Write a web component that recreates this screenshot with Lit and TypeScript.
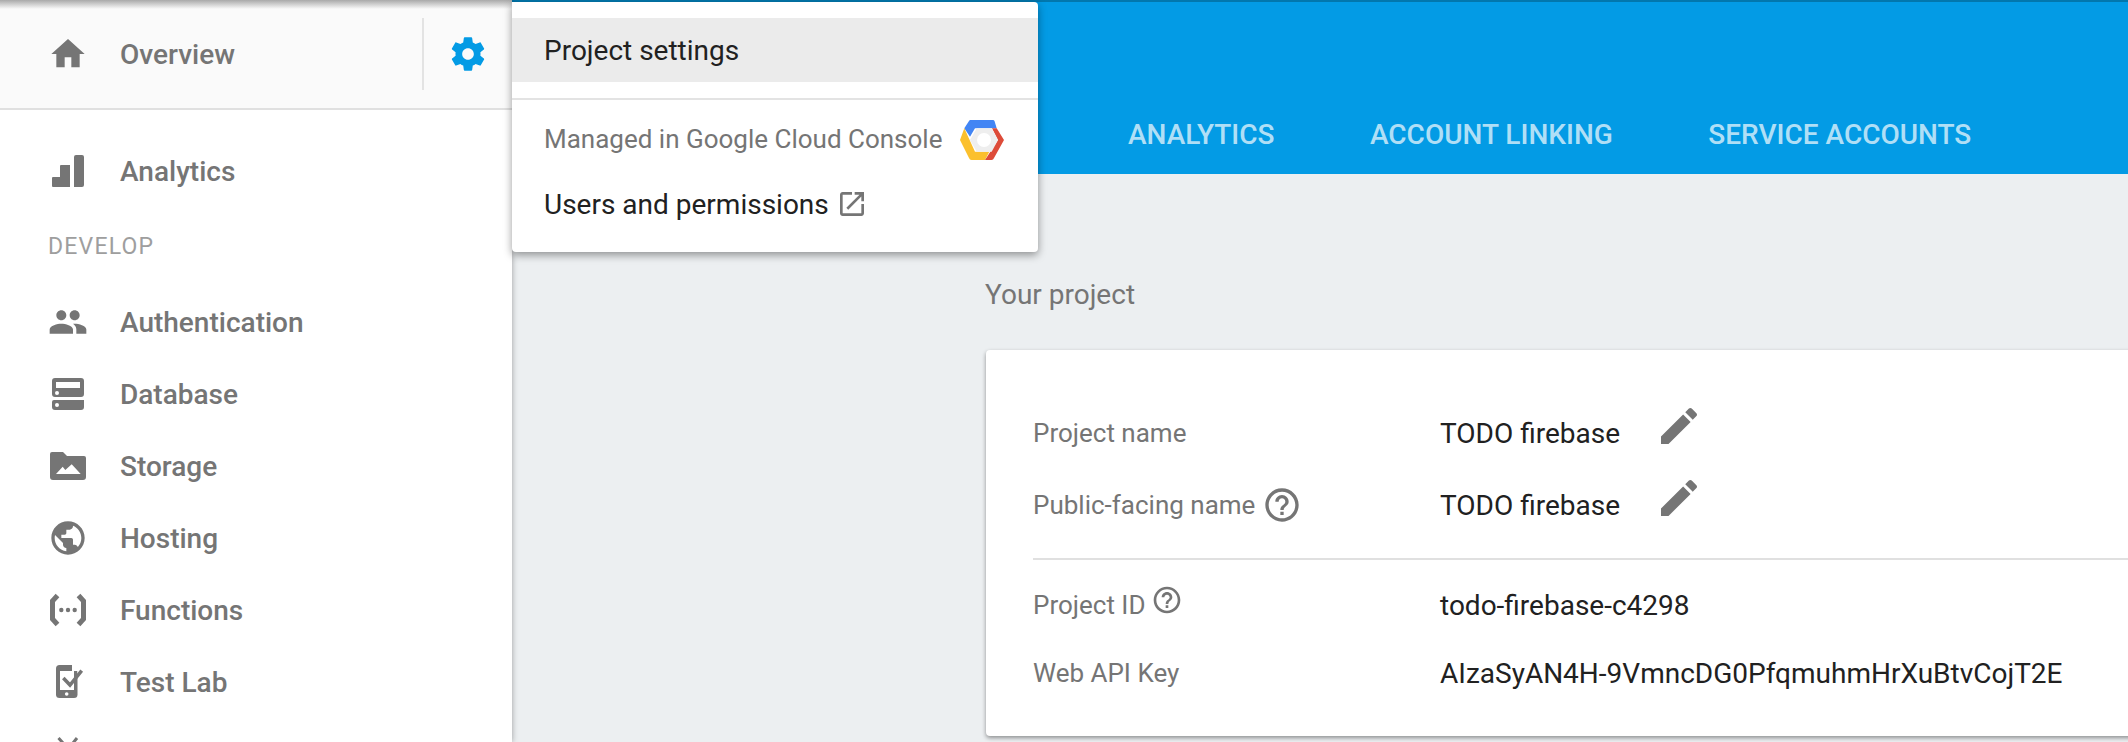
import { LitElement, html, css, svg } from "lit";
import { customElement } from "lit/decorators.js";

const mi = (d: string, size: number, cls = "") => html`<svg class="ic ${cls}" style="width:${size}px;height:${size}px" viewBox="0 0 24 24"><path d=${d}></path></svg>`;
const box = (c: unknown) => html`<svg class="ic" style="width:40px;height:40px" viewBox="0 0 40 40">${c}</svg>`;

const HOME = "M10 20v-6h4v6h5v-8h3L12 3 2 12h3v8z";
const GEAR = "M19.43 12.98c.04-.32.07-.64.07-.98s-.03-.66-.07-.98l2.11-1.65c.19-.15.24-.42.12-.64l-2-3.46c-.12-.22-.39-.3-.61-.22l-2.49 1c-.52-.4-1.08-.73-1.69-.98l-.38-2.65C14.46 2.18 14.25 2 14 2h-4c-.25 0-.46.18-.49.42l-.38 2.65c-.61.25-1.17.59-1.69.98l-2.49-1c-.23-.09-.49 0-.61.22l-2 3.46c-.13.22-.07.49.12.64l2.11 1.65c-.04.32-.07.65-.07.98s.03.66.07.98l-2.11 1.65c-.19.15-.24.42-.12.64l2 3.46c.12.22.39.3.61.22l2.49-1c.52.4 1.08.73 1.69.98l.38 2.65c.03.24.24.42.49.42h4c.25 0 .46-.18.49-.42l.38-2.65c.61-.25 1.17-.59 1.69-.98l2.49 1c.23.09.49 0 .61-.22l2-3.46c.12-.22.07-.49-.12-.64l-2.11-1.65zM12 15.5c-1.93 0-3.5-1.57-3.5-3.5s1.57-3.5 3.5-3.5 3.5 1.57 3.5 3.5-1.57 3.5-3.5 3.5z";
const PEOPLE = "M16 11c1.66 0 2.99-1.34 2.99-3S17.66 5 16 5c-1.66 0-3 1.34-3 3s1.34 3 3 3zm-8 0c1.66 0 2.99-1.34 2.99-3S9.66 5 8 5C6.34 5 5 6.34 5 8s1.34 3 3 3zm0 2c-2.33 0-7 1.17-7 3.5V19h14v-2.5c0-2.33-4.67-3.5-7-3.5zm8 0c-.29 0-.62.02-.97.05 1.16.84 1.97 1.97 1.97 3.45V19h6v-2.5c0-2.33-4.67-3.5-7-3.5z";
const PUBLIC = "M12 2C6.48 2 2 6.48 2 12s4.48 10 10 10 10-4.48 10-10S17.52 2 12 2zm-1 17.93c-3.95-.49-7-3.85-7-7.93 0-.62.08-1.21.21-1.79L9 15v1c0 1.1.9 2 2 2v1.93zm6.9-2.54c-.26-.81-1-1.39-1.9-1.39h-1v-3c0-.55-.45-1-1-1H8v-2h2c.55 0 1-.45 1-1V7h2c1.1 0 2-.9 2-2v-.41c2.93 1.19 5 4.06 5 7.41 0 2.08-.8 3.97-2.1 5.39z";
const EDIT = "M3 17.25V21h3.75L17.81 9.94l-3.75-3.75L3 17.25zM20.71 7.04c.39-.39.39-1.02 0-1.41l-2.34-2.34c-.39-.39-1.02-.39-1.41 0l-1.83 1.83 3.75 3.75 1.83-1.83z";
const HELP = "M11 18h2v-2h-2v2zm1-16C6.48 2 2 6.48 2 12s4.48 10 10 10 10-4.48 10-10S17.52 2 12 2zm0 18c-4.41 0-8-3.59-8-8s3.59-8 8-8 8 3.59 8 8-3.59 8-8 8zm0-14c-2.21 0-4 1.79-4 4h2c0-1.1.9-2 2-2s2 .9 2 2c0 2-3 1.75-3 5h2c0-2.25 3-2.5 3-5 0-2.21-1.79-4-4-4z";
const OPEN = "M19 19H5V5h7V3H5c-1.11 0-2 .9-2 2v14c0 1.1.89 2 2 2h14c1.1 0 2-.9 2-2v-7h-2v7zM14 3v2h3.59l-9.83 9.83 1.41 1.41L19 6.41V10h2V3h-7z";

const ANALYTICS = box(svg`<path d="M4 27a1 1 0 0 1 1-1h7V15a1 1 0 0 1 1-1h9v22H5a1 1 0 0 1-1-1zM26 6a2 2 0 0 1 2-2h6a2 2 0 0 1 2 2v28a2 2 0 0 1-2 2h-8z"></path>`);
const DATABASE = box(svg`<path fill-rule="evenodd" d="M7 4h26a3 3 0 0 1 3 3v13a3 3 0 0 1-3 3H7a3 3 0 0 1-3-3V7a3 3 0 0 1 3-3zM8 8v6h24V8zM9 17a2 2 0 1 0 0 4 2 2 0 0 0 0-4zM6 26h30v7a3 3 0 0 1-3 3H7a3 3 0 0 1-3-3v-5a2 2 0 0 1 2-2zM9 29a2 2 0 1 0 0 4 2 2 0 0 0 0-4z"></path>`);
const STORAGE = box(svg`<path d="M4 6h11l4 4h17a2 2 0 0 1 2 2v19a3 3 0 0 1-3 3H5a3 3 0 0 1-3-3V8a2 2 0 0 1 2-2z"></path><path fill="#fff" d="M8 28l6.700-7.300 2.600 3.300 6.400-5.700 9 9.700z"></path>`);
const FUNCTIONS = box(svg`<path d="M9.500 5.500L4.500 11v18l5 5.500M30.500 5.500L35.500 11v18l-5 5.500" fill="none" stroke="#757575" stroke-width="5"></path><circle cx="13.300" cy="20" r="2.200"></circle><circle cx="20" cy="20" r="2.200"></circle><circle cx="26.700" cy="20" r="2.200"></circle>`);
const TESTLAB = box(svg`<rect x="8" y="3" width="21.500" height="33" rx="3.500"></rect><rect x="12" y="9" width="14" height="19" fill="#fff"></rect><path fill="#fff" d="M24 1h12v14H29.500V9H24z"></path><circle cx="18.700" cy="32" r="1.800" fill="#fff"></circle><path d="M15.300 16l6.700 7L33.700 8.700" fill="none" stroke="#757575" stroke-width="3.500"></path>`);
const NEXT = box(svg`<path d="M10.500 4L15 9M29 4l-4 5" fill="none" stroke="#757575" stroke-width="3"></path>`);

const primary = [
  { label: "Authentication", icon: mi(PEOPLE, 40) },
  { label: "Database", icon: DATABASE },
  { label: "Storage", icon: STORAGE },
  { label: "Hosting", icon: mi(PUBLIC, 40) },
  { label: "Functions", icon: FUNCTIONS },
  { label: "Test Lab", icon: TESTLAB },
  { label: "", icon: NEXT },
];

@customElement("app-root")
export class AppRoot extends LitElement {
  static styles = css`
    :host { display: block; position: relative; width: 2128px; height: 742px; overflow: hidden; font-family: Roboto, sans-serif; background: #eceff1; }
    * { box-sizing: border-box; }
    .ic { fill: #757575; display: block; flex: none; }
    .shell { display: grid; grid-template-columns: 512px 1fr; height: 742px; }
    .side { position: relative; z-index: 2; background: #fff; box-shadow: 0 0 6px rgba(0,0,0,.35); overflow: hidden; height: 742px; }
    .side::before { content: ""; position: absolute; left: 0; right: 0; top: 0; height: 9px; background: linear-gradient(#a9a9a9, rgba(170,170,170,0)); }
    .top { height: 110px; background: #fafafa; border-bottom: 2px solid #e0e0e0; display: flex; align-items: center; padding-left: 48px; }
    .top .t { flex: 1; }
    .vr { width: 2px; height: 72px; background: #e3e3e3; }
    .gear { width: 88px; display: flex; justify-content: center; }
    .gear .ic { fill: #039be5; }
    .item { display: flex; align-items: center; height: 72px; padding-left: 48px; }
    .t { font-size: 28px; font-weight: 500; color: #757575; margin-left: 32px; }
    .nav { padding-top: 25px; }
    .section { height: 79px; display: flex; align-items: center; padding-left: 48px; font-size: 23px; letter-spacing: 1.2px; color: #9e9e9e; }
    .main { min-width: 0; overflow: hidden; height: 742px; }
    .bar { height: 174px; background: #039be5; border-top: 2px solid #0277ad; display: flex; align-items: flex-end; gap: 95.500px; padding: 0 0 21px 616px; }
    .tab { font-size: 28px; font-weight: 500; color: rgba(255,255,255,.7); line-height: 36px; white-space: nowrap; }
    .content { padding: 101px 0 0 474px; }
    .h { font-size: 28px; line-height: 40px; color: #757575; margin: 0 0 35px -1px; }
    .card { width: 1500px; height: 386px; background: #fff; border-radius: 4px; box-shadow: 0 2px 4px rgba(0,0,0,.4); padding: 47px 0 0 47px; }
    .row { display: flex; align-items: center; height: 72px; }
    .row.s { height: 68px; }
    .l { width: 407px; display: flex; align-items: center; gap: 7px; font-size: 26px; color: #757575; }
    .row.s .l { gap: 5px; }
    .v { font-size: 28px; color: #212121; white-space: nowrap; }
    .edit { margin: 0 0 14px 35px; }
    .hr { height: 2px; background: #e0e0e0; margin: 17px 0 11px; }
    .up { margin-bottom: 10px; }
    .menu { position: absolute; z-index: 3; left: 512px; top: 2px; width: 526px; height: 250px; background: #fff; border-radius: 0 4px 4px 4px; box-shadow: 0 3px 8px rgba(0,0,0,.4); padding-top: 16px; }
    .mi { height: 64px; background: #ebebeb; display: flex; align-items: center; padding-left: 32px; font-size: 28px; color: #212121; }
    .mhr { height: 2px; background: #e3e3e3; margin-top: 16px; }
    .managed { margin-top: 19px; height: 40px; display: flex; align-items: center; gap: 18px; padding-left: 32px; font-size: 26px; color: #757575; }
    .managed svg { margin-top: 2px; }
    .users { margin-top: 25px; height: 40px; display: flex; align-items: center; gap: 7px; padding-left: 32px; font-size: 28px; color: #212121; }
  `;

  render() {
    return html`
      <div class="shell">
        <aside class="side">
          <div class="top">
            ${mi(HOME, 40)}
            <span class="t">Overview</span>
            <div class="vr"></div>
            <div class="gear">${mi(GEAR, 40)}</div>
          </div>
          <div class="nav">
            <div class="item">${ANALYTICS}<span class="t">Analytics</span></div>
            <div class="section">DEVELOP</div>
            ${primary.map((p) => html`<div class="item">${p.icon}${p.label ? html`<span class="t">${p.label}</span>` : ""}</div>`)}
          </div>
        </aside>
        <main class="main">
          <div class="bar">
            <span class="tab">ANALYTICS</span>
            <span class="tab">ACCOUNT LINKING</span>
            <span class="tab">SERVICE ACCOUNTS</span>
          </div>
          <div class="content">
            <div class="h">Your project</div>
            <div class="card">
              <div class="row"><div class="l">Project name</div><div class="v">TODO firebase</div><div class="edit">${mi(EDIT, 48)}</div></div>
              <div class="row"><div class="l">Public-facing name ${mi(HELP, 40)}</div><div class="v">TODO firebase</div><div class="edit">${mi(EDIT, 48)}</div></div>
              <div class="hr"></div>
              <div class="row s"><div class="l">Project ID <span class="up">${mi(HELP, 32)}</span></div><div class="v">todo-firebase-c4298</div></div>
              <div class="row s"><div class="l">Web API Key</div><div class="v">AIzaSyAN4H-9VmncDG0PfqmuhmHrXuBtvCojT2E</div></div>
            </div>
          </div>
        </main>
      </div>
      <div class="menu">
        <div class="mi">Project settings</div>
        <div class="mhr"></div>
        <div class="managed">Managed in Google Cloud Console
          <svg width="44" height="40" viewBox="0 0 44 40">
            <path fill="#4285f4" d="M4.300 8.300L9 1a2 2 0 0 1 2-1h22a2 2 0 0 1 1.500 1l2.200 7.300H15L10 16.700z"></path>
            <path fill="#fbc02d" d="M4.300 8.300L0 20l9 18a3 3 0 0 0 3 2h13l4.300-8.300H15z"></path>
            <path fill="#dd4b39" d="M36.700 8.300L44 20 34 38a3 3 0 0 1-3 2h-6l13-20-6-11.700z"></path>
            <path fill="#eee" d="M10 20l6.700-11.700h15L38 20l-6.300 11.700h-15z"></path>
            <circle cx="24" cy="20" r="7" fill="#fff"></circle>
          </svg>
        </div>
        <div class="users">Users and permissions ${mi(OPEN, 32)}</div>
      </div>
    `;
  }
}
